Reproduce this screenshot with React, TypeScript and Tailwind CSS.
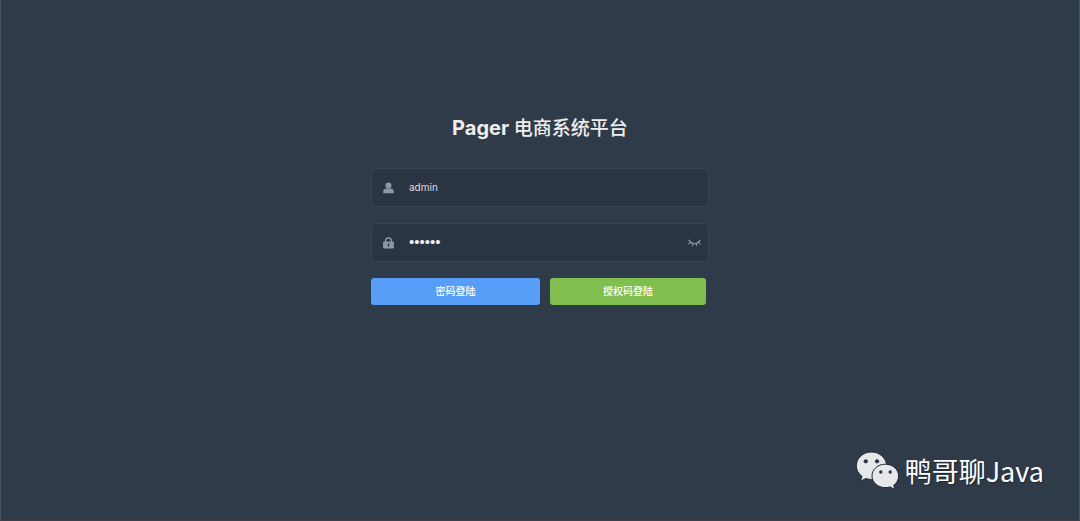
import { useState } from "react";

const UserIcon = () => (
  <svg viewBox="0 0 12 12" className="size-3 fill-[#889aa4]" role="img" aria-label="Username">
    <circle cx="5.500" cy="3.400" r="3" />
    <path d="M.2 11.300v-1.600c0-1.900 1.200-3 3-3.100h4.600c1.800.1 3 1.200 3 3.100v1.600z" />
  </svg>
);

const LockIcon = () => (
  <svg viewBox="0 0 12 12" className="size-3" role="img" aria-label="Password">
    <path d="M2.500 5.500V4a3 3 0 0 1 6 0v1.500" fill="none" stroke="#889aa4" strokeWidth="1.300" />
    <rect x=".1" y="4.500" width="10.800" height="7" rx="1" fill="#889aa4" />
    <path d="M5.500 9.800V8" stroke="#2b3443" strokeWidth="1" />
    <circle cx="5.500" cy="7.600" r="1" fill="#2b3443" />
  </svg>
);

const EyeClosedIcon = () => (
  <svg
    viewBox="0 0 14 8"
    className="h-2 w-3.5"
    fill="none"
    stroke="#889aa4"
    strokeWidth="1.100"
    strokeLinecap="round"
    aria-hidden="true"
  >
    <path d="M.8 1.200C2.500 3.500 4.300 4.700 6.500 4.700s4-1.200 5.700-3.500" />
    <path d="M2.500 3.300.9 4.900M4.900 4.600 4.300 6.700M8.100 4.600l.6 2.100M10.500 3.300l1.600 1.600" />
  </svg>
);

const WechatIcon = () => (
  <svg viewBox="0 0 44 40" className="h-10 w-11" aria-hidden="true">
    <g fill="#e7e8ea" stroke="#1d2733" strokeWidth="1">
      <path d="M16.500 1C8 1 1.300 7.200 1.300 14.800c0 4.300 2.200 8 5.700 10.500l-1.600 5 5.500-2.800c1.800.6 3.600.9 5.600.9 8.400 0 15.100-6 15.100-13.500S24.900 1 16.500 1z" />
      <path d="M30.300 13.200c-7.400 0-13.300 5.200-13.300 11.700s5.900 11.700 13.300 11.700c1.700 0 3.300-.2 4.700-.7l5 2.700-1.300-4.300c3-2.100 4.900-5.500 4.900-9.400 0-6.500-5.900-11.700-13.300-11.700z" />
    </g>
    <g fill="#2b3644">
      <circle cx="10.800" cy="10.300" r="2.100" />
      <circle cx="22" cy="10.300" r="2.100" />
      <circle cx="25.800" cy="21" r="1.700" />
      <circle cx="35.200" cy="21" r="1.700" />
    </g>
  </svg>
);

export default function App() {
  const [username, setUsername] = useState("admin");
  const [password, setPassword] = useState("123456");
  const [visible, setVisible] = useState(false);

  return (
    <main className="flex min-h-screen flex-col justify-between border-x border-b border-x-[#465361] border-b-[#3f4045] bg-[#2f3b49] font-['Inter','Noto_Sans_CJK_SC',sans-serif]">
      <form
        className="mx-auto mt-28 w-full max-w-[338px]"
        onSubmit={(e) => e.preventDefault()}
      >
        <h1 className="mb-[23px] text-center text-xl leading-8 font-bold text-[#eeeeee]">
          Pager <span className="text-[19px] font-medium">电商系统平台</span>
        </h1>

        <div className="mb-4 flex h-[39px] items-center rounded border border-[#3a4553] bg-[#2b3443] pr-1.5 pl-[11px]">
          <label htmlFor="username">
            <UserIcon />
          </label>
          <input
            id="username"
            type="text"
            className="ml-3.5 min-w-0 flex-1 bg-transparent text-[10px] text-[#dddfe2] outline-none"
            value={username}
            onChange={(e) => setUsername(e.target.value)}
          />
        </div>

        <div className="mb-4 flex h-[39px] items-center rounded border border-[#3a4553] bg-[#2b3443] pr-1.5 pl-[11px]">
          <label htmlFor="password">
            <LockIcon />
          </label>
          <input
            id="password"
            type={visible ? "text" : "password"}
            className="ml-3.5 min-w-0 flex-1 bg-transparent font-['Liberation_Sans',sans-serif] text-[15px] text-[#eeeeee] outline-none"
            value={password}
            onChange={(e) => setPassword(e.target.value)}
          />
          <button
            type="button"
            aria-label="Toggle password"
            onClick={() => setVisible(!visible)}
          >
            <EyeClosedIcon />
          </button>
        </div>

        <div className="flex text-[10px] font-medium text-white">
          <button type="submit" className="mr-2.5 h-[27px] w-1/2 rounded-[3px] bg-[#589ef8]">
            密码登陆
          </button>
          <button type="button" className="mr-[3px] h-[27px] flex-1 rounded-[3px] bg-[#80be50]">
            授权码登陆
          </button>
        </div>
      </form>

      <footer className="mr-[35px] mb-[29px] flex items-center justify-end gap-1.5">
        <WechatIcon />
        <span className="font-['Noto_Sans_CJK_SC',sans-serif] text-[27px] leading-10 text-white [text-shadow:1px_1px_1px_#1d2733]">
          鸭哥聊Java
        </span>
      </footer>
    </main>
  );
}
